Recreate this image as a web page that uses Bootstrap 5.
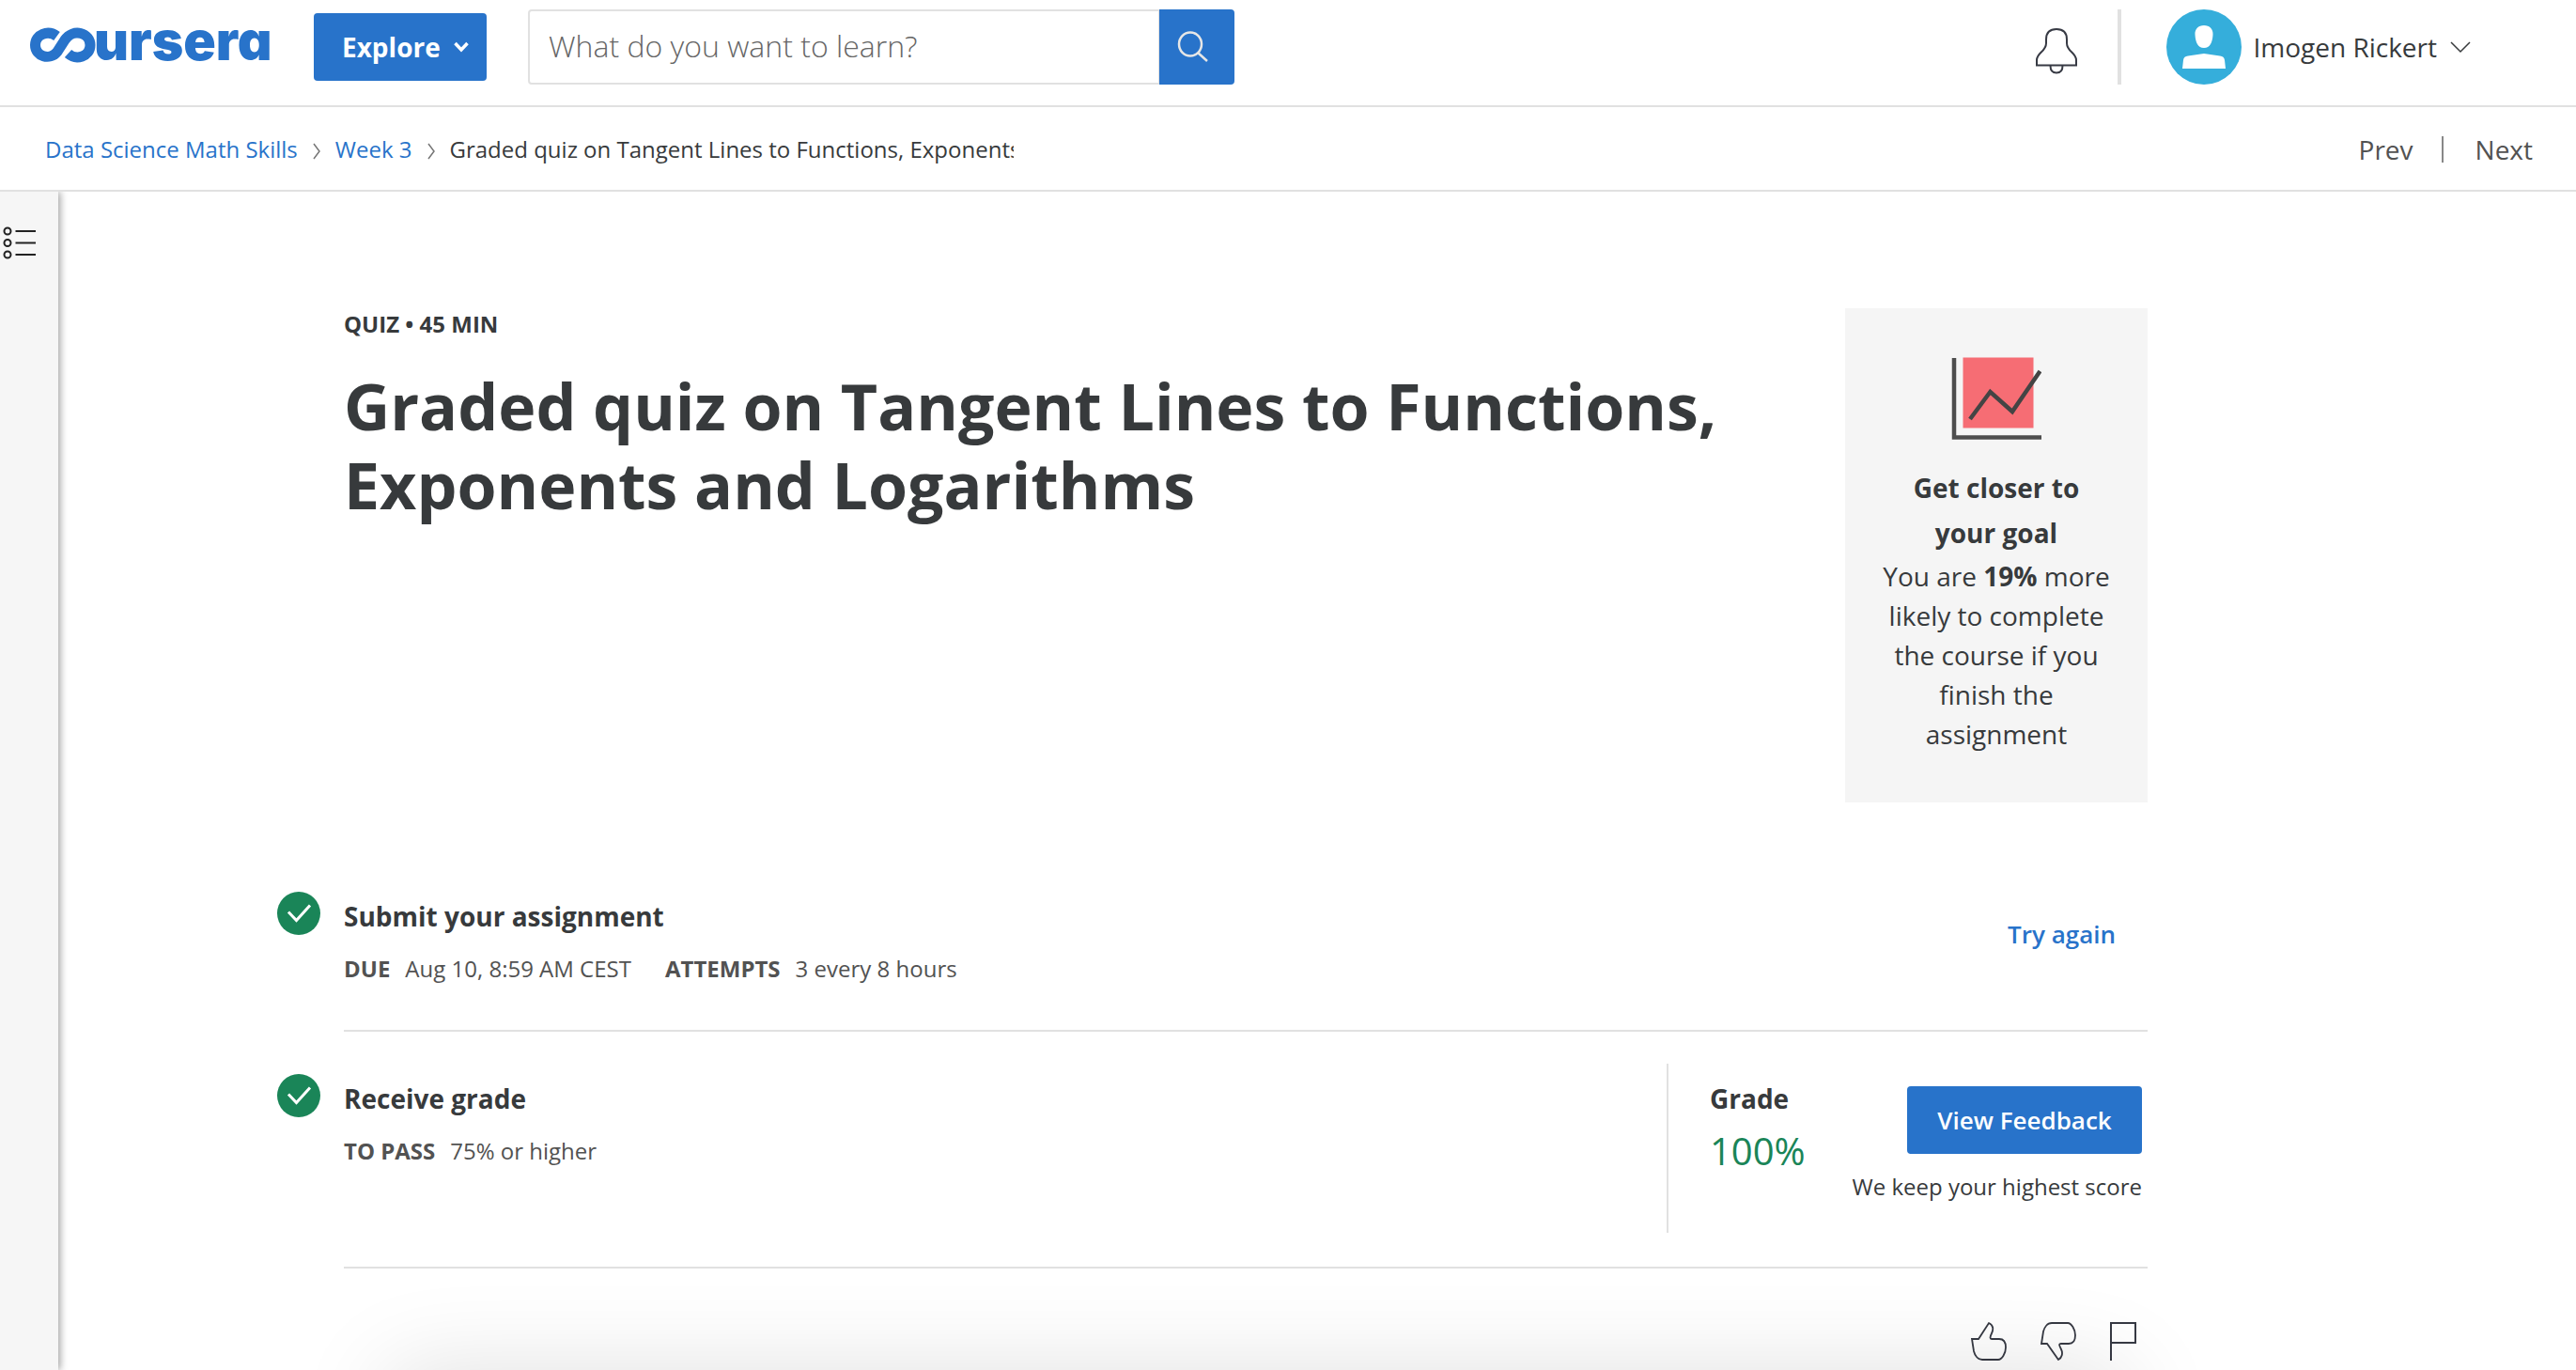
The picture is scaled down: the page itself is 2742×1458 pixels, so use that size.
<!DOCTYPE html>
<html lang="en">
<head>
<meta charset="utf-8">
<meta name="viewport" content="width=device-width, initial-scale=1">
<title>Graded quiz | Coursera</title>
<link rel="stylesheet" href="https://cdn.jsdelivr.net/npm/bootstrap@5.3.0/dist/css/bootstrap.min.css">
<style>
:root{--brand:#2873ca;--ink:#373a3c;--soft:#525252;--rule:#e1e1e1;--ok:#1a8558}
body{font-family:"Open Sans","Noto Sans",sans-serif;font-size:28px;line-height:40px;color:var(--ink);background:#fff;min-height:100vh}
a{color:var(--brand);text-decoration:none}
h1,h2,p,dl,dt,dd{margin:0}
svg{display:block;flex:none;fill:none}
.rule-b{border-bottom:2px solid var(--rule)}
.topbar{height:114px;padding:10px 112px 22px 32px}
.brand-logo{overflow:visible}
.brand-logo text{font-family:Inter,"Open Sans",sans-serif;font-weight:900;font-size:57px;fill:var(--brand);font-feature-settings:"cv11","ss01"}
.btn-brand{--bs-btn-bg:var(--brand);--bs-btn-color:#fff;--bs-btn-hover-bg:#1f5fa9;--bs-btn-hover-color:#fff;height:72px;border:0;border-radius:4px}
.btn-explore{width:184px;margin-left:48px;padding:0 19px 0 30px;font-size:28px;font-weight:700}
.searchbox{width:752px;height:80px;margin-left:44px}
.searchbox .form-control{border:2px solid var(--rule);border-radius:4px 0 0 4px;padding:0 20px 2px;font-size:32px;font-weight:300;color:#666}
.searchbox .form-control::placeholder{color:#666}
.searchbox .btn{width:80px;height:80px;border-radius:0 4px 4px 0;padding:0 8px 0 0}
.bar-div{width:4px;height:80px;background:var(--rule);margin:0 48px 0 42px}
.plain-btn{background:none;border:0;padding:0;color:inherit}
.bell{padding-top:8px}
.user-caret{margin-left:14px}
.crumbbar{height:90px;padding:2px 46px 0 48px;font-size:24px}
.crumb-now{width:600px;overflow:hidden;white-space:nowrap}
.pager-links{font-size:28px}
.pager-links a{color:var(--soft)}
.pager-links span{width:2px;height:28px;background:#888;margin:0 34px 0 30px}
.rail{width:62px;background:#f6f6f6;box-shadow:2px 0 8px rgba(0,0,0,.38);padding:36px 0 0 2px;clip-path:inset(0 -20px 0 0)}
.page{padding:124px 224px 0 232px}
.page-in{max-width:1992px}
.lead-in{padding-left:72px;margin-bottom:95px}
.kicker{font-size:24px;line-height:34px;font-weight:700;margin-bottom:28px}
.title{font-size:68px;line-height:84px;font-weight:700}
.goal{width:322px;background:#f5f5f5;padding:52px 36px}
.goal h2{font-size:28px;line-height:48px;font-weight:700;padding:0 20px;margin:27px 0 1px}
.goal p{line-height:42px}
.step{column-gap:25px;padding-left:1px}
.step-body{padding-top:6px}
.step h2{font-size:28px;line-height:40px;font-weight:700}
.facts{font-size:24px;line-height:36px;color:var(--soft);margin-top:18px}
.facts dt{margin-right:16px}
.facts dd{margin-right:36px}
.step-one .step-body{padding-bottom:47px}
.try{font-size:26px;font-weight:600;padding:19px 34px 0 0}
.step-two>svg{margin-top:45px}
.step-two .step-body{padding:34px 6px 36px 0}
.step-two .step-left{padding-top:17px}
.gradebox{width:506px;height:180px;border-left:2px solid var(--rule);padding:17px 0 0 44px}
.score{font-size:40px;line-height:48px;color:var(--ok);margin-top:12px}
.btn-feedback{width:250px;font-size:26px;font-weight:600;margin-top:7px}
.note{font-size:24px;line-height:36px;margin-top:17px}
.react{gap:36px;padding:56px 12px 0 0}
.dock-shadow{left:414px;right:480px;bottom:-102px;height:100px;box-shadow:0 0 100px rgba(0,0,0,.13);pointer-events:none}
</style>
<script src="https://cdn.jsdelivr.net/npm/bootstrap@5.3.0/dist/js/bootstrap.bundle.min.js"></script>
</head>
<body class="d-flex flex-column overflow-hidden">
<header class="topbar rule-b d-flex align-items-center">
  <a href="#" aria-label="coursera"><svg class="brand-logo" width="254" height="52" viewBox="0 0 254 52">
    <path d="M28.500 14.500C19 7.500 5.500 12.500 5.500 24C5.500 36 21 41 29 31L37 18.500C46 5.500 64 11 64 24C64 36.500 49 40.500 40.500 33" stroke="#2873ca" stroke-width="11"/>
    <text x="68" y="40">ursera</text></svg></a>
  <button class="btn btn-brand btn-explore d-flex align-items-center justify-content-between" type="button">Explore
    <svg width="16" height="14" viewBox="0 0 16 14"><path d="M1.500 3L8 10L14.500 3" stroke="#fff" stroke-width="3.500"/></svg></button>
  <form class="searchbox input-group flex-nowrap">
    <input class="form-control" type="search" placeholder="What do you want to learn?" aria-label="Search">
    <button class="btn btn-brand d-flex align-items-center justify-content-center" type="button" aria-label="Search"><svg width="34" height="34" viewBox="0 0 34 34"><path d="M26 14A12 12.500 0 1 1 2 14A12 12.500 0 1 1 26 14M22 23L32 32" stroke="#e6e6e6" stroke-width="2.500"/></svg></button>
  </form>
  <div class="ms-auto d-flex align-items-center">
    <button class="plain-btn bell" type="button" aria-label="Notifications"><svg width="46" height="50" viewBox="0 0 46 50"><path d="M2 40.500V35C2 27 12 26 12 17V13C12 6 16 2 23 2S34 6 34 13V17C34 26 44 27 44 35V40.500ZM16.500 41C16.500 46 19 48.500 23 48.500S29.500 46 29.500 41" stroke="#373a44" stroke-width="2"/></svg></button>
    <div class="bar-div"></div>
    <button class="plain-btn d-flex align-items-center" type="button">
      <svg width="80" height="80" viewBox="0 0 80 80"><circle cx="40" cy="40" r="40" fill="#35aedb"/><path d="M40 17C46 17 50 21 49.500 27C49 35 46.500 41 40 41S31 35 30.500 27C30 21 34 17 40 17ZM17 63L18 54C18.500 51 20 50 23 49.500L40 47L57 49.500C60 50 61.500 51 62 54L63 63Z" fill="#fff"/></svg>
      <span class="ms-2 ps-1">Imogen Rickert</span>
      <svg class="user-caret" width="22" height="14" viewBox="0 0 22 14"><path d="M1 2L11 12L21 2" stroke="#373a3c" stroke-width="1.500"/></svg>
    </button>
  </div>
</header>
<nav class="crumbbar rule-b d-flex align-items-center" aria-label="Breadcrumb">
  <a href="#">Data Science Math Skills</a>
  <svg class="mx-3 mt-1" width="8" height="18" viewBox="0 0 8 18"><path d="M1 1L7 9L1 17" stroke="#757575" stroke-width="1.500"/></svg>
  <a href="#">Week 3</a>
  <svg class="mx-3 mt-1" width="8" height="18" viewBox="0 0 8 18"><path d="M1 1L7 9L1 17" stroke="#757575" stroke-width="1.500"/></svg>
  <div class="crumb-now">Graded quiz on Tangent Lines to Functions, Exponents and Logarithms</div>
  <div class="pager-links ms-auto d-flex align-items-center"><a href="#">Prev</a><span></span><a href="#">Next</a></div>
</nav>
<div class="d-flex flex-grow-1">
  <aside class="rail flex-shrink-0">
    <button class="plain-btn" type="button" aria-label="Course outline"><svg width="38" height="38" viewBox="0 0 38 38"><g stroke="#222" stroke-width="2"><circle cx="6" cy="6" r="3.500"/><circle cx="6" cy="18.500" r="3.500"/><circle cx="6" cy="31" r="3.500"/><path d="M14.500 6H36M14.500 18.500H36M14.500 31H36"/></g></svg></button>
  </aside>
  <main class="page flex-grow-1">
    <div class="page-in">
      <section class="lead-in d-flex justify-content-between align-items-start">
        <div>
          <p class="kicker">QUIZ • 45 MIN</p>
          <h1 class="title">Graded quiz on Tangent Lines to Functions,<br>Exponents and Logarithms</h1>
        </div>
        <aside class="goal text-center flex-shrink-0">
          <svg class="mx-auto" width="96" height="88" viewBox="0 0 96 88"><rect x="12.500" y="0.500" width="75" height="75" fill="#f66d74"/><path d="M3 1V85.500H97" stroke="#4d4d4d" stroke-width="4.500"/><path d="M20 66L41.500 37L65 58L94.500 15" stroke="#444" stroke-width="4.500"/></svg>
          <h2>Get closer to your goal</h2>
          <p>You are <b>19%</b> more likely to complete the course if you finish the assignment</p>
        </aside>
      </section>
      <section class="step step-one d-flex align-items-start">
        <svg width="46" height="46" viewBox="0 0 46 46"><circle cx="23" cy="23" r="23" fill="#1a8558"/><path d="M12 21.500L20.500 30.500L35 14.500" stroke="#fff" stroke-width="3"/></svg>
        <div class="step-body rule-b flex-grow-1 d-flex justify-content-between">
          <div>
            <h2>Submit your assignment</h2>
            <dl class="facts d-flex"><dt>DUE</dt><dd>Aug 10, 8:59 AM CEST</dd><dt>ATTEMPTS</dt><dd>3 every 8 hours</dd></dl>
          </div>
          <a class="try" href="#">Try again</a>
        </div>
      </section>
      <section class="step step-two d-flex align-items-start">
        <svg width="46" height="46" viewBox="0 0 46 46"><circle cx="23" cy="23" r="23" fill="#1a8558"/><path d="M12 21.500L20.500 30.500L35 14.500" stroke="#fff" stroke-width="3"/></svg>
        <div class="step-body rule-b flex-grow-1 d-flex justify-content-between">
          <div class="step-left">
            <h2>Receive grade</h2>
            <dl class="facts d-flex"><dt>TO PASS</dt><dd>75% or higher</dd></dl>
          </div>
          <div class="gradebox d-flex justify-content-between">
            <div><h2>Grade</h2><p class="score">100%</p></div>
            <div class="d-flex flex-column align-items-end">
              <button class="btn btn-brand btn-feedback p-0" type="button">View Feedback</button>
              <p class="note">We keep your highest score</p>
            </div>
          </div>
        </div>
      </section>
      <div class="react d-flex justify-content-end">
        <button class="plain-btn" type="button" aria-label="Like"><svg width="38" height="42" viewBox="0 0 38 42"><path d="M1 19H8L19 2C24 4 24 9 22 13C20 17 20 19 22 19H30C35 19 37 23 37 28C37 34 33 41 29 41H12C7 41 4 36 3 32Z" stroke="#373a44" stroke-width="1.800"/></svg></button>
        <button class="plain-btn" type="button" aria-label="Dislike"><svg width="38" height="42" viewBox="0 0 38 42"><path d="M1 24H7L19 41C23 39 24 34 22 30C20 26 19 24 22 24H30C35 24 37 20 37 15C37 9 33 2 29 2H12C7 2 4 7 3 11Z" stroke="#373a44" stroke-width="1.800"/></svg></button>
        <button class="plain-btn" type="button" aria-label="Flag"><svg width="28" height="42" viewBox="0 0 28 42"><path d="M1 42V2H27V23H1" stroke="#373a44" stroke-width="2"/></svg></button>
      </div>
    </div>
  </main>
</div>
<div class="dock-shadow position-fixed"></div>
</body>
</html>
